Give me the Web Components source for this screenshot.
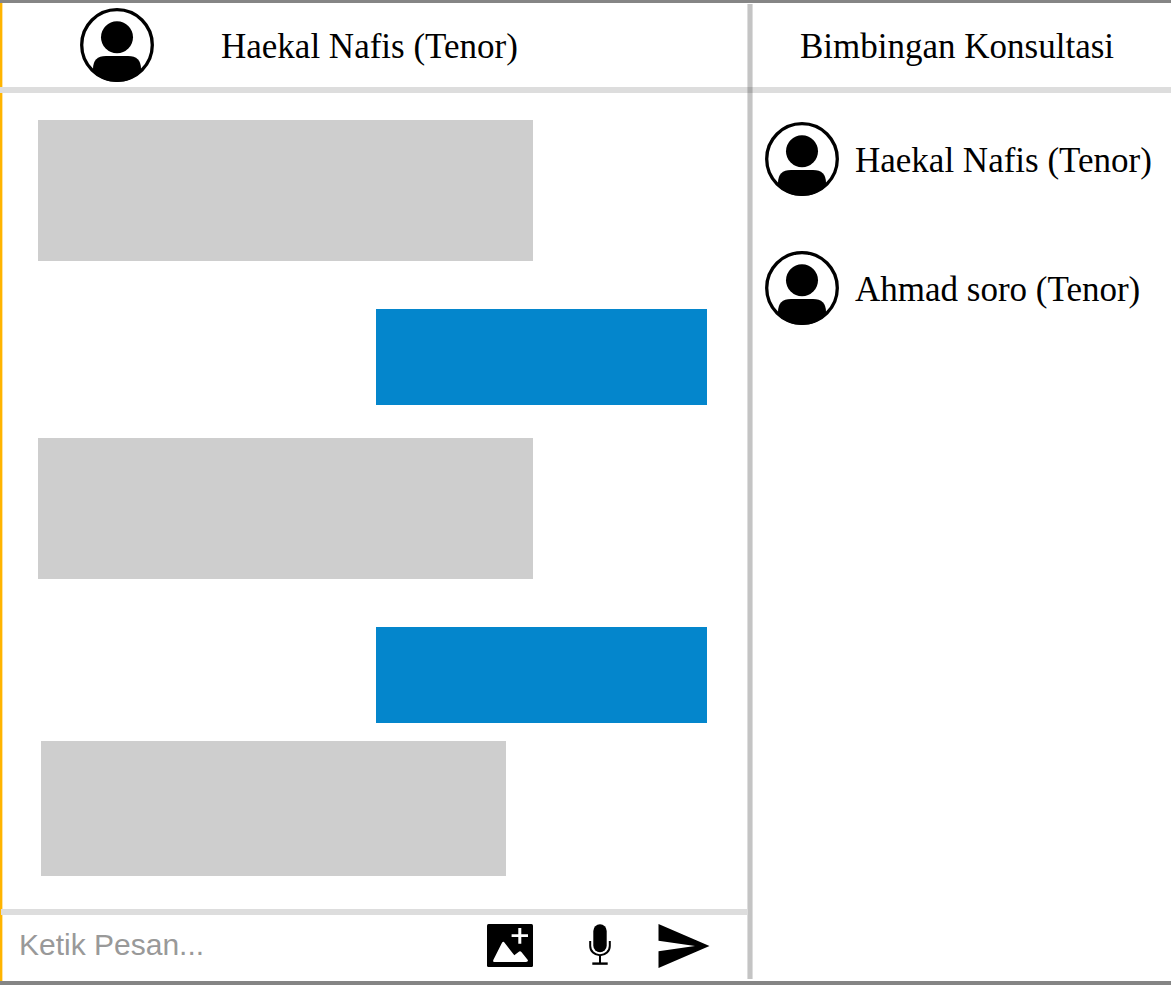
<!DOCTYPE html>
<html lang="id">
<head>
<meta charset="utf-8">
<meta name="viewport" content="width=device-width, initial-scale=1">
<title>Bimbingan Konsultasi</title>
<style>
  body { margin: 0; background: #fff; color: #000; font: 35px/40px "Liberation Serif", "Times New Roman", serif; }
</style>
</head>
<body>
<chat-app>
  <chat-header slot="header">
    <span slot="name">Haekal Nafis (Tenor)</span>
    <span slot="title">Bimbingan Konsultasi</span>
  </chat-header>
  <chat-thread slot="thread">
    <chat-bubble></chat-bubble>
    <chat-bubble mine></chat-bubble>
    <chat-bubble></chat-bubble>
    <chat-bubble mine></chat-bubble>
    <chat-bubble compact></chat-bubble>
  </chat-thread>
  <chat-composer slot="composer"></chat-composer>
  <contact-list slot="contacts">
    <contact-item>Haekal Nafis (Tenor)</contact-item>
    <contact-item>Ahmad soro (Tenor)</contact-item>
  </contact-list>
</chat-app>
<script>
  const define = (name, html) => customElements.define(name, class extends HTMLElement {
    constructor() {
      super();
      this.attachShadow({ mode: "open" }).innerHTML = html;
    }
  });

  define("user-avatar", `
    <style>
      :host { display: block; flex: none; width: 74px; height: 74px; }
      svg { display: block; width: 100%; height: 100%; }
    </style>
    <svg viewBox="0 0 74 74" aria-hidden="true">
      <circle cx="37" cy="37" r="35.3" fill="none" stroke="#000" stroke-width="3.3"/>
      <circle cx="37" cy="29.3" r="16"/>
      <path d="M13 64V61Q13 48 26 48H48Q61 48 61 61V64Q51 74 37 74Q23 74 13 64Z"/>
    </svg>`);

  define("chat-header", `
    <style>
      :host { display: grid; grid-template-columns: subgrid; border-bottom: 6px solid #ddd; }
      .person { display: flex; align-items: center; gap: 67px; height: 84px; padding-left: 80px; }
      h1, h2 { margin: 0; padding-top: 3px; font: inherit; white-space: nowrap; }
      h2 { grid-column: 3; align-self: center; text-align: center; padding-right: 10px; }
    </style>
    <div class="person"><user-avatar></user-avatar><h1><slot name="name"></slot></h1></div>
    <h2><slot name="title"></slot></h2>`);

  define("chat-bubble", `
    <style>
      :host { display: block; box-sizing: border-box; width: 495px; max-width: 100%; min-height: 141px; background: #cecece; }
      :host([mine]) { align-self: flex-end; width: 331px; min-height: 96px; background: #0486cc; }
      :host([compact]) { width: 465px; min-height: 135px; }
    </style>
    <slot></slot>`);

  define("chat-thread", `
    <style>
      :host { display: flex; flex-direction: column; padding: 27px 40px 33px 38px; }
      ::slotted([mine]) { margin: 48px 0 33px; }
      ::slotted([compact]) { margin: -15px 0 0 3px; }
    </style>
    <slot></slot>`);

  define("chat-composer", `
    <style>
      :host { display: block; margin-left: 1px; border-top: 6px solid #ddd; }
      form { display: flex; align-items: center; height: 62px; margin: 0; padding: 0 37px 4px 18px; }
      input { flex: 1; min-width: 0; height: 40px; margin-right: 16px; padding: 0 0 2px; border: 0; background: none; color: #000;
              font: 30px/40px "Liberation Sans", Arial, sans-serif; }
      input::placeholder { color: #999; opacity: 1; }
      button { flex: none; display: block; padding: 0; border: 0; background: none; color: #000; cursor: pointer; }
      .photo { margin-right: 56px; }
      .voice { margin-right: 47px; }
      svg { display: block; fill: currentColor; }
    </style>
    <form onsubmit="return false">
      <input type="text" aria-label="Ketik Pesan" placeholder="Ketik Pesan...">
      <button class="photo" type="button" aria-label="Kirim gambar">
        <svg width="46" height="44" viewBox="0 0 46 44"><rect width="46" height="43" rx="1.5"/>
          <path fill="#fff" d="M31.3 4h3v6.2h6.7v2.8h-6.7v6.7h-3v-6.7h-6.7v-2.8h6.7zM6.3 36L15 18.8Q16.3 16.8 17.6 18.8L27.3 31.3L32.2 27.5Q33.3 26.7 34.4 28L41 36.3Q41 38 39 38H7Q5.8 37.8 6.3 36Z"/></svg>
      </button>
      <button class="voice" type="button" aria-label="Rekam suara">
        <svg width="22" height="44" viewBox="0 0 22 44"><rect x="4.3" y="0.3" width="13.4" height="28" rx="6.7"/>
          <path fill="none" stroke="#000" stroke-width="2" d="M1.2 17V22A9.8 9.3 0 0 0 20.8 22V17M11 31V40"/>
          <path d="M3.3 38.4h15.4v2.4H3.3z"/></svg>
      </button>
      <button type="submit" aria-label="Kirim">
        <svg width="52" height="44" viewBox="0 0 52 44"><path d="M0.5 0L51.5 22L0.5 44V27.3L37 22L0.5 16.7Z"/></svg>
      </button>
    </form>`);

  define("contact-item", `
    <style>
      :host { display: block; }
      a { display: flex; align-items: center; gap: 16px; color: inherit; text-decoration: none; white-space: nowrap; }
      span { padding-top: 3px; }
    </style>
    <a href="#"><user-avatar></user-avatar><span><slot></slot></span></a>`);

  define("contact-list", `
    <style>:host { display: flex; flex-direction: column; gap: 55px; padding: 29px 12px; }</style>
    <slot></slot>`);

  define("chat-app", `
    <style>
      :host { display: grid; grid-template: auto 1fr auto / minmax(0, 1fr) 6px 418px; box-sizing: border-box; min-height: 100vh;
              border-top: 3px solid #858585; border-bottom: 4px solid #858585;
              background: linear-gradient(90deg, #ffb400 2px, #ffe3a0 2px, #ffe3a0 3px, #fff 3px); }
      slot[name="header"]::slotted(*) { grid-column: 1 / -1; grid-row: 1; }
      slot[name="thread"]::slotted(*) { grid-column: 1; grid-row: 2; }
      slot[name="composer"]::slotted(*) { grid-column: 1; grid-row: 3; }
      slot[name="contacts"]::slotted(*) { grid-column: 3; grid-row: 2 / 4; }
      .divider { grid-column: 2; grid-row: 1 / -1; z-index: 1; margin: 1px 0 2px;
                 background: linear-gradient(90deg, #0002 1px, #0000003b 1px, #0000003b 5px, #0002 5px); }
    </style>
    <slot name="header"></slot>
    <slot name="thread"></slot>
    <slot name="composer"></slot>
    <div class="divider"></div>
    <slot name="contacts"></slot>`);
</script>
</body>
</html>
